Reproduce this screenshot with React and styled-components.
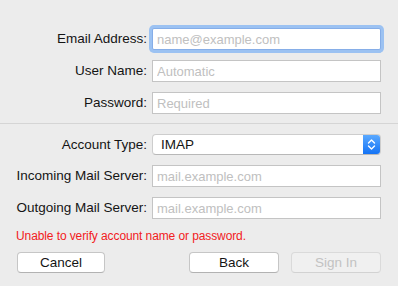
import React from 'react';
import styled, { createGlobalStyle } from 'styled-components';

const Global = createGlobalStyle`
  html, body { margin: 0; padding: 0; background: #ececec; }
  body {
    font-family: "Liberation Sans", Arial, sans-serif;
    font-size: 13px;
    color: #1a1a1a;
  }
`;

const Sheet = styled.div`
  width: 398px;
  height: 286px;
  background: #ececec;
  box-sizing: border-box;
  padding-top: 28px;
`;

const Form = styled.div`
  display: grid;
  grid-template-columns: 1fr 229px;
  column-gap: 5px;
  row-gap: 10px;
  padding-right: 17px;
  align-items: center;
`;

const Label = styled.label`
  text-align: right;
  font-size: 13.5px;
  line-height: 16px;
  color: #141414;
  white-space: nowrap;
`;

const Field = styled.input`
  box-sizing: border-box;
  width: 229px;
  height: 22px;
  margin: 0;
  padding: 0 4px;
  border: 1px solid ${p => (p.focused ? '#86aee8' : '#c4c4c4')};
  border-radius: ${p => (p.focused ? '2px' : '0')};
  box-shadow: ${p => (p.focused ? '0 0 0 3px #9cc2f2' : 'none')};
  background: #fff;
  font-family: "Liberation Sans", Arial, sans-serif;
  font-size: 13px;
  outline: none;
  &::placeholder { color: #c0c0c0; }
`;

const Divider = styled.div`
  height: 1px;
  background: #d5d5d5;
  margin: 9px 0 10px;
`;

const Popup = styled.div`
  box-sizing: border-box;
  width: 229px;
  height: 21px;
  display: flex;
  align-items: stretch;
  background: #fff;
  border: 1px solid #cdcdcd;
  border-bottom-color: #b8b8b8;
  border-radius: 4px;
  overflow: hidden;
`;

const PopupText = styled.span`
  flex: 1;
  padding-left: 8px;
  font-size: 13.5px;
  line-height: 19px;
  color: #141414;
`;

const PopupArrows = styled.span`
  width: 17px;
  display: flex;
  align-items: center;
  justify-content: center;
  background: linear-gradient(#5aa9ff, #1473f5);
`;

const ErrorText = styled.div`
  padding: 10px 0 0 16px;
  font-size: 12px;
  line-height: 14px;
  color: #f2201c;
  letter-spacing: -0.1px;
`;

const ButtonBar = styled.div`
  display: flex;
  padding: 9px 17px 0 17px;
  gap: 12px;
`;

const Button = styled.button`
  box-sizing: border-box;
  width: ${p => p.w}px;
  height: 21px;
  margin: 0;
  padding: 0;
  margin-right: ${p => p.push || 0}px;
  background: ${p => (p.disabled ? '#f0f0f0' : '#fff')};
  border: 1px solid ${p => (p.disabled ? '#dadada' : '#c6c6c6')};
  border-bottom-color: ${p => (p.disabled ? '#d2d2d2' : '#b2b2b2')};
  border-radius: 4px;
  font-family: "Liberation Sans", Arial, sans-serif;
  font-size: 13.5px;
  color: ${p => (p.disabled ? '#c2c2c2' : '#141414')};
`;

function Chevrons() {
  return (
    <svg width="9" height="13" viewBox="0 0 9 13">
      <path d="M1.5 5 L4.5 2 L7.5 5" fill="none" stroke="#fff" strokeWidth="1.4" strokeLinecap="round" strokeLinejoin="round" />
      <path d="M1.5 8 L4.5 11 L7.5 8" fill="none" stroke="#fff" strokeWidth="1.4" strokeLinecap="round" strokeLinejoin="round" />
    </svg>
  );
}

export default function App() {
  return (
    <>
      <Global />
      <Sheet>
        <Form>
          <Label>Email Address:</Label>
          <Field focused placeholder="name@example.com" />
          <Label>User Name:</Label>
          <Field placeholder="Automatic" />
          <Label>Password:</Label>
          <Field type="password" placeholder="Required" />
        </Form>
        <Divider />
        <Form>
          <Label>Account Type:</Label>
          <Popup>
            <PopupText>IMAP</PopupText>
            <PopupArrows><Chevrons /></PopupArrows>
          </Popup>
          <Label>Incoming Mail Server:</Label>
          <Field placeholder="mail.example.com" />
          <Label>Outgoing Mail Server:</Label>
          <Field placeholder="mail.example.com" />
        </Form>
        <ErrorText>Unable to verify account name or password.</ErrorText>
        <ButtonBar>
          <Button w={88} push={72}>Cancel</Button>
          <Button w={90}>Back</Button>
          <Button w={90} disabled>Sign In</Button>
        </ButtonBar>
      </Sheet>
    </>
  );
}
